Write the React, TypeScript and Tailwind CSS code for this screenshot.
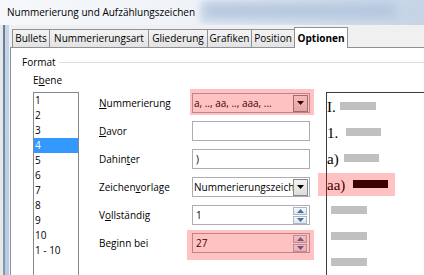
import React from "react";

function Combo({ value }: { value: string }) {
  return (
    <div className="flex h-[20px] w-[118px] items-center border border-[#abadb3] bg-white pl-[1px] pr-[1px]">
      <span className="min-w-0 flex-1 overflow-hidden whitespace-nowrap">{value}</span>
      <div className="flex h-[17px] w-[15px] shrink-0 items-center justify-center border border-[#8a8a8a] bg-gradient-to-b from-[#f4f4f4] to-[#dcdcdc]">
        <svg width="7" height="4" viewBox="0 0 7 4">
          <path d="M0 0 H7 L3.5 4Z" fill="#000" />
        </svg>
      </div>
    </div>
  );
}

function Spin({ value }: { value: string }) {
  return (
    <div className="flex h-[20px] w-[118px] items-center border border-[#abadb3] bg-white pl-[3px] pr-[2px]">
      <span className="flex-1">{value}</span>
      <div className="flex flex-col gap-px">
        <div className="flex h-[8px] w-[14px] items-center justify-center border border-[#a9b7c6] bg-gradient-to-b from-[#f6f9fc] to-[#dce5ef]">
          <svg width="7" height="4" viewBox="0 0 7 4">
            <path d="M0 4 L3.5 0 L7 4Z" fill="#4d6d9a" />
          </svg>
        </div>
        <div className="flex h-[8px] w-[14px] items-center justify-center border border-[#a9b7c6] bg-gradient-to-b from-[#f6f9fc] to-[#dce5ef]">
          <svg width="7" height="4" viewBox="0 0 7 4">
            <path d="M0 0 H7 L3.5 4Z" fill="#4d6d9a" />
          </svg>
        </div>
      </div>
    </div>
  );
}

const tabs = [
  { label: "Bullets", w: "w-[38px]" },
  { label: "Nummerierungsart", w: "w-[100px]" },
  { label: "Gliederung", w: "w-[60px]" },
  { label: "Grafiken", w: "w-[45px]" },
  { label: "Position", w: "w-[44px]" },
];

const levels = ["1", "2", "3", "4", "5", "6", "7", "8", "9", "10", "1 - 10"];

export default function App() {
  return (
    <div className="relative flex h-[275px] w-[424px] flex-col overflow-hidden bg-[#f0f0f0] font-['Open_Sans',sans-serif] text-[10px] text-black">
      {/* title bar */}
      <div className="relative flex h-[25px] shrink-0 items-center overflow-hidden bg-gradient-to-r from-[#f6f8fb] via-[#eef2f7] to-[#c9d6e6] pl-[7px]">
        <div className="pointer-events-none absolute left-[205px] top-[5px] h-[12px] w-[190px] bg-[#9fb5d2] blur-[5px]" />
        <div className="pointer-events-none absolute left-[200px] top-[0px] h-[24px] w-[224px] bg-[#c2d2e6] opacity-60 blur-[3px]" />
        <span className="relative text-[10px]">Nummerierung und Aufzählungszeichen</span>
      </div>

      <div className="flex min-h-0 flex-1">
        {/* left window frame */}
        <div className="flex w-[10px] shrink-0">
          <div className="w-[3px] bg-[#e4e9ef]" />
          <div className="w-[2px] bg-gradient-to-b from-[#6f7c8b] to-[#8a98a8]" />
          <div className="w-[4px] bg-gradient-to-b from-[#c5d6ea] to-[#b3cbe6]" />
          <div className="w-[1px] bg-[#eef2f6]" />
        </div>

        <div className="flex min-w-0 flex-1 flex-col">
          {/* tabs */}
          <div className="flex h-[22px] shrink-0 items-end pl-[2px]">
            {tabs.map((t, i) => (
              <div
                key={t.label}
                className={`flex h-[18px] ${t.w} items-center justify-center border border-b-0 border-[#8e9199] bg-gradient-to-b from-[#f3f3f3] to-[#e3e3e3] ${i > 0 ? "-ml-px" : ""}`}
              >
                {t.label}
              </div>
            ))}
            <div className="relative top-px z-10 -ml-px flex h-[21px] w-[54px] items-center justify-center border border-b-0 border-[#8e9199] bg-white font-bold">
              Optionen
            </div>
          </div>

          {/* panel */}
          <div className="flex min-h-0 flex-1 flex-col border-l border-t border-[#8e9199] bg-white">
            <div className="mt-[7px] flex h-[14px] items-center pl-[11px]">
              <span>Format</span>
              <div className="ml-[3px] h-px flex-1 bg-[#d5dfe5]" />
            </div>
            <div className="mt-[4px] flex h-[14px] items-center pl-[22px]">
              E<span className="underline">b</span>ene
            </div>

            <div className="mt-[2px] flex pl-[22px]">
              {/* level list */}
              <div className="mt-[3px] h-[190px] w-[46px] shrink-0 border border-[#828790] bg-white">
                {levels.map((l) => (
                  <div
                    key={l}
                    className={`flex h-[15px] items-center pl-[1px] ${l === "4" ? "bg-[#3399ff] text-white" : ""}`}
                  >
                    {l}
                  </div>
                ))}
              </div>

              {/* labels and controls */}
              <div className="ml-[20px] flex shrink-0 flex-col">
                <div className="flex h-[28px] items-center">
                  <span className="w-[93px]">
                    <span className="underline">N</span>ummerierung
                  </span>
                  <div className="relative">
                    <Combo value="a, .., aa, .., aaa, ..." />
                    <div className="pointer-events-none absolute left-[-2px] top-[-4px] h-[26px] w-[124px] bg-[rgba(255,0,0,0.24)]" />
                  </div>
                </div>
                <div className="flex h-[28px] items-center">
                  <span className="w-[93px]">
                    <span className="underline">D</span>avor
                  </span>
                  <div className="h-[20px] w-[118px] border border-[#abadb3] bg-white" />
                </div>
                <div className="flex h-[28px] items-center">
                  <span className="w-[93px]">
                    Dahin<span className="underline">t</span>er
                  </span>
                  <div className="flex h-[20px] w-[118px] items-center border border-[#abadb3] bg-white pl-[3px]">
                    )
                  </div>
                </div>
                <div className="flex h-[28px] items-center">
                  <span className="w-[93px]">
                    Zeichen<span className="underline">v</span>orlage
                  </span>
                  <Combo value="Nummerierungszeich" />
                </div>
                <div className="flex h-[28px] items-center">
                  <span className="w-[93px]">
                    V<span className="underline">o</span>llständig
                  </span>
                  <Spin value="1" />
                </div>
                <div className="flex h-[28px] items-center">
                  <span className="w-[93px]">Beginn bei</span>
                  <div className="relative">
                    <Spin value="27" />
                    <div className="pointer-events-none absolute left-[-5px] top-[-3px] h-[30px] w-[127px] bg-[rgba(255,0,0,0.24)]" />
                  </div>
                </div>
              </div>

              {/* preview */}
              <div className="relative ml-[16px] mt-[3px] h-[200px] flex-1 border-l border-t border-[#3c3c3c] bg-white font-['Liberation_Serif',serif] text-[15px] leading-none">
                <div className="flex h-[26px] items-center pt-[3px]">
                  <span className="w-[13px]">I.</span>
                  <div className="-mt-[3px] h-[8px] w-[36px] bg-[#c0c0c0]" />
                </div>
                <div className="flex h-[26px] items-center pt-[3px]">
                  <span className="w-[19px]">1.</span>
                  <div className="-mt-[3px] h-[8px] w-[35px] bg-[#c0c0c0]" />
                </div>
                <div className="flex h-[26px] items-center pt-[3px]">
                  <span className="w-[17px]">a)</span>
                  <div className="-mt-[3px] h-[8px] w-[35px] bg-[#c0c0c0]" />
                </div>
                <div className="flex h-[26px] items-center pt-[3px]">
                  <span className="w-[26px]">aa)</span>
                  <div className="-mt-[3px] h-[8px] w-[35px] bg-black" />
                </div>
                <div className="flex h-[26px] items-center pl-[4px]">
                  <div className="h-[8px] w-[36px] bg-[#c0c0c0]" />
                </div>
                <div className="flex h-[26px] items-center pl-[4px]">
                  <div className="h-[8px] w-[36px] bg-[#c0c0c0]" />
                </div>
                <div className="flex h-[26px] items-center pl-[4px]">
                  <div className="h-[8px] w-[36px] bg-[#c0c0c0]" />
                </div>
                <div className="pointer-events-none absolute left-[-9px] top-[80px] h-[23px] w-[77px] bg-[rgba(255,0,0,0.24)]" />
              </div>
            </div>
          </div>
        </div>
      </div>
    </div>
  );
}
